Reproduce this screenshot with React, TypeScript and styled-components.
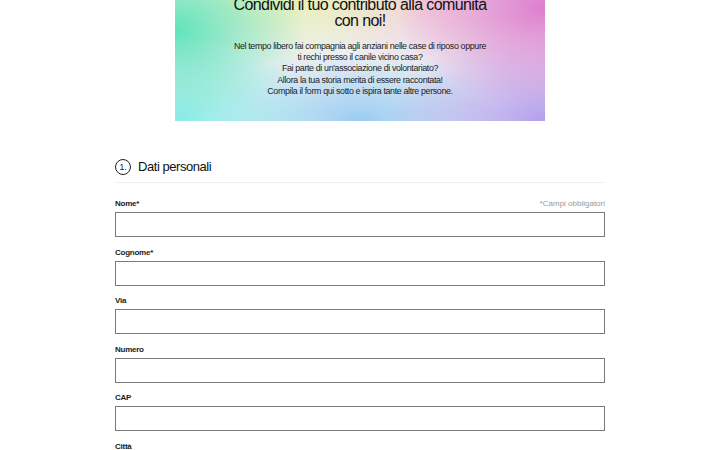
import React from "react";
import styled, { createGlobalStyle } from "styled-components";

const GlobalStyle = createGlobalStyle`
  html, body {
    margin: 0;
    padding: 0;
    background: #fff;
  }
  body {
    font-family: "Liberation Sans Narrow", "Liberation Sans", Arial, sans-serif;
    color: #1a1a1a;
    overflow: hidden;
  }
`;

const fields = [
  { label: "Nome*", note: "*Campi obbligatori" },
  { label: "Cognome*" },
  { label: "Via" },
  { label: "Numero" },
  { label: "CAP" },
  { label: "Città" },
];

const App = () => {
  return (
    <>
      <GlobalStyle />
      <Page>
        <Banner>
          <BannerTitle>
            Condividi il tuo contributo alla comunità
            <br />
            con noi!
          </BannerTitle>
          <BannerText>
            Nel tempo libero fai compagnia agli anziani nelle case di riposo oppure
            <br />
            ti rechi presso il canile vicino casa?
            <br />
            Fai parte di un'associazione di volontariato?
            <br />
            Allora la tua storia merita di essere raccontata!
            <br />
            Compila il form qui sotto e ispira tante altre persone.
          </BannerText>
        </Banner>

        <FormSection>
          <SectionHeader>
            <StepBadge>1.</StepBadge>
            <SectionTitle>Dati personali</SectionTitle>
          </SectionHeader>

          <FieldList>
            {fields.map((f) => (
              <Field key={f.label}>
                <LabelRow>
                  <Label>{f.label}</Label>
                  {f.note && <Note>{f.note}</Note>}
                </LabelRow>
                <Input type="text" />
              </Field>
            ))}
          </FieldList>
        </FormSection>
      </Page>
    </>
  );
};

export default App;

const Page = styled.div`
  display: flex;
  flex-direction: column;
  align-items: center;
  margin-top: -30px;
`;

const Banner = styled.section`
  width: 370px;
  height: 151px;
  box-sizing: border-box;
  padding-top: 27px;
  text-align: center;
  background:
    radial-gradient(ellipse 130px 90px at 0% 40%, rgba(95, 228, 185, 1), rgba(95, 228, 185, 0) 100%),
    radial-gradient(ellipse 150px 75px at 0% 100%, rgba(135, 236, 232, 1), rgba(135, 236, 232, 0) 100%),
    radial-gradient(ellipse 150px 80px at 30% 10%, rgba(232, 240, 165, 0.95), rgba(232, 240, 165, 0) 100%),
    radial-gradient(ellipse 150px 100px at 100% 25%, rgba(222, 125, 205, 1), rgba(222, 125, 205, 0) 100%),
    radial-gradient(ellipse 160px 90px at 100% 100%, rgba(180, 158, 236, 1), rgba(180, 158, 236, 0) 100%),
    radial-gradient(ellipse 150px 70px at 50% 100%, rgba(155, 205, 242, 1), rgba(155, 205, 242, 0) 100%),
    radial-gradient(ellipse 120px 70px at 68% 20%, rgba(245, 205, 215, 0.95), rgba(245, 205, 215, 0) 100%),
    #eceff3;
`;

const BannerTitle = styled.h1`
  margin: 0;
  font-size: 16px;
  line-height: 16px;
  font-weight: 400;
  letter-spacing: -0.6px;
  color: #111;
`;

const BannerText = styled.p`
  margin: 12px 0 0;
  font-size: 8.9px;
  line-height: 11.2px;
  letter-spacing: -0.36px;
  color: #1c1c1c;
`;

const FormSection = styled.section`
  width: 490px;
  margin-top: 38px;
`;

const SectionHeader = styled.div`
  display: flex;
  align-items: center;
  gap: 7px;
  padding-bottom: 7px;
  border-bottom: 1px solid #eeeeee;
`;

const StepBadge = styled.span`
  width: 14px;
  height: 14px;
  border: 1px solid #222;
  border-radius: 50%;
  display: flex;
  align-items: center;
  justify-content: center;
  font-size: 8.5px;
  line-height: 1;
  color: #111;
`;

const SectionTitle = styled.h2`
  margin: 0;
  font-size: 13px;
  line-height: 16px;
  font-weight: 400;
  letter-spacing: -0.45px;
  color: #111;
`;

const FieldList = styled.div`
  display: flex;
  flex-direction: column;
  gap: 11.5px;
  margin-top: 17px;
`;

const Field = styled.div`
  display: flex;
  flex-direction: column;
  gap: 3.5px;
`;

const LabelRow = styled.div`
  display: flex;
  justify-content: space-between;
  align-items: baseline;
`;

const Label = styled.label`
  font-size: 8px;
  line-height: 8.5px;
  font-weight: 700;
  letter-spacing: -0.25px;
  color: #1a1a1a;
`;

const Note = styled.span`
  font-size: 8px;
  line-height: 8.5px;
  color: #999;
`;

const Input = styled.input`
  height: 25px;
  box-sizing: border-box;
  border: 1px solid #7a7a7a;
  border-radius: 0;
  padding: 0 8px;
  font-family: inherit;
  background: #fff;
  outline: none;
`;
